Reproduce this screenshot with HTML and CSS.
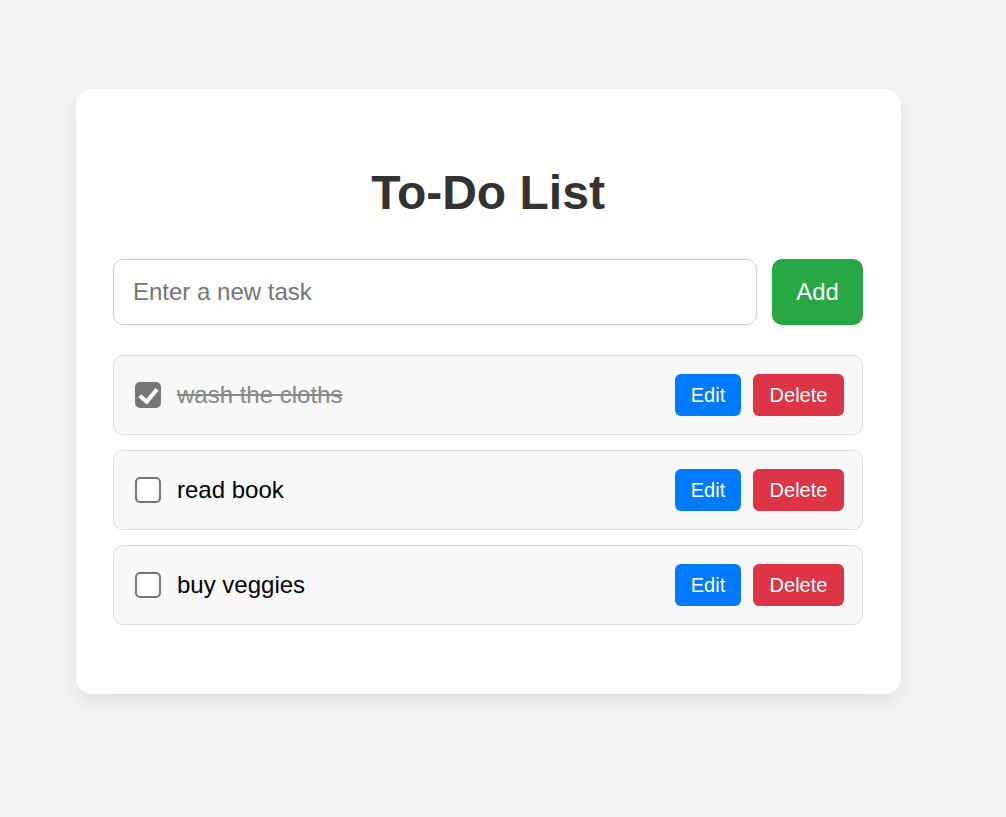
FILE: index.html
```html
<!DOCTYPE html>
<html lang="en">
<head>
<meta charset="utf-8">
<title>To-Do List</title>
<link rel="stylesheet" href="styles.css">
</head>
<body>
<div class="card">
  <h1 class="title">To-Do List</h1>
  <div class="add-row">
    <input class="task-input" type="text" placeholder="Enter a new task">
    <button class="btn btn-add">Add</button>
  </div>
  <ul class="task-list">
    <li class="task">
      <input class="task-check" type="checkbox" checked>
      <span class="task-text done">wash the cloths</span>
      <div class="task-actions">
        <button class="btn btn-edit">Edit</button>
        <button class="btn btn-delete">Delete</button>
      </div>
    </li>
    <li class="task">
      <input class="task-check" type="checkbox">
      <span class="task-text">read book</span>
      <div class="task-actions">
        <button class="btn btn-edit">Edit</button>
        <button class="btn btn-delete">Delete</button>
      </div>
    </li>
    <li class="task">
      <input class="task-check" type="checkbox">
      <span class="task-text">buy veggies</span>
      <div class="task-actions">
        <button class="btn btn-edit">Edit</button>
        <button class="btn btn-delete">Delete</button>
      </div>
    </li>
  </ul>
</div>
</body>
</html>
```

FILE: styles.css
```css
html, body {
  margin: 0;
  padding: 0;
}
body {
  background: #f4f5f7;
  font-family: "Liberation Sans", Arial, sans-serif;
  min-height: 817px;
  padding-top: 89px;
  box-sizing: border-box;
}
.card {
  width: 825px;
  box-sizing: border-box;
  margin-left: 76px;
  background: #fff;
  border-radius: 16px;
  box-shadow: 0 8px 24px rgba(0, 0, 0, 0.1);
  padding: 38px 38px 69px 37px;
}
.title {
  margin: 38px 0 38px;
  font-size: 48px;
  line-height: 56px;
  font-weight: bold;
  color: #333;
  text-align: center;
}
.add-row {
  display: flex;
  gap: 15px;
}
.task-input {
  flex: 1;
  height: 66px;
  box-sizing: border-box;
  border: 1px solid #ccc;
  border-radius: 10px;
  padding: 0 19px;
  font-family: "Liberation Sans", Arial, sans-serif;
  font-size: 24px;
  color: #333;
  outline: none;
}
.task-input::placeholder {
  color: #757575;
}
.btn {
  border: none;
  color: #fff;
  font-family: "Liberation Sans", Arial, sans-serif;
  cursor: pointer;
}
.btn-add {
  width: 91px;
  height: 66px;
  background: #28a745;
  border-radius: 10px;
  font-size: 24px;
  padding: 0;
}
.task-list {
  list-style: none;
  margin: 30px 0 0;
  padding: 0;
  display: flex;
  flex-direction: column;
  gap: 15px;
}
.task {
  display: flex;
  align-items: center;
  height: 80px;
  box-sizing: border-box;
  background: #f8f8f8;
  border: 1px solid #ddd;
  border-radius: 10px;
  padding: 0 18px 0 21px;
}
.task-check {
  appearance: none;
  -webkit-appearance: none;
  position: relative;
  flex: none;
  width: 26px;
  height: 26px;
  box-sizing: border-box;
  margin: 0 16px 0 0;
  border: 2px solid #767676;
  border-radius: 5px;
  background: #fff;
}
.task-check:checked {
  background: #767676;
}
.task-check:checked::after {
  content: "";
  position: absolute;
  left: 6px;
  top: 0.5px;
  width: 7px;
  height: 14px;
  border: solid #fff;
  border-width: 0 4px 4px 0;
  transform: rotate(40deg);
}
.task-text {
  flex: 1;
  font-size: 24px;
  color: #000;
}
.task-text.done {
  color: #888;
  text-decoration: line-through;
}
.task-actions {
  display: flex;
  gap: 12px;
}
.btn-edit,
.btn-delete {
  height: 42px;
  font-size: 20px;
  border-radius: 6px;
  padding: 0 15px;
}
.btn-edit {
  width: 66px;
  background: #007bff;
}
.btn-delete {
  width: 91px;
  background: #dc3545;
}
```
